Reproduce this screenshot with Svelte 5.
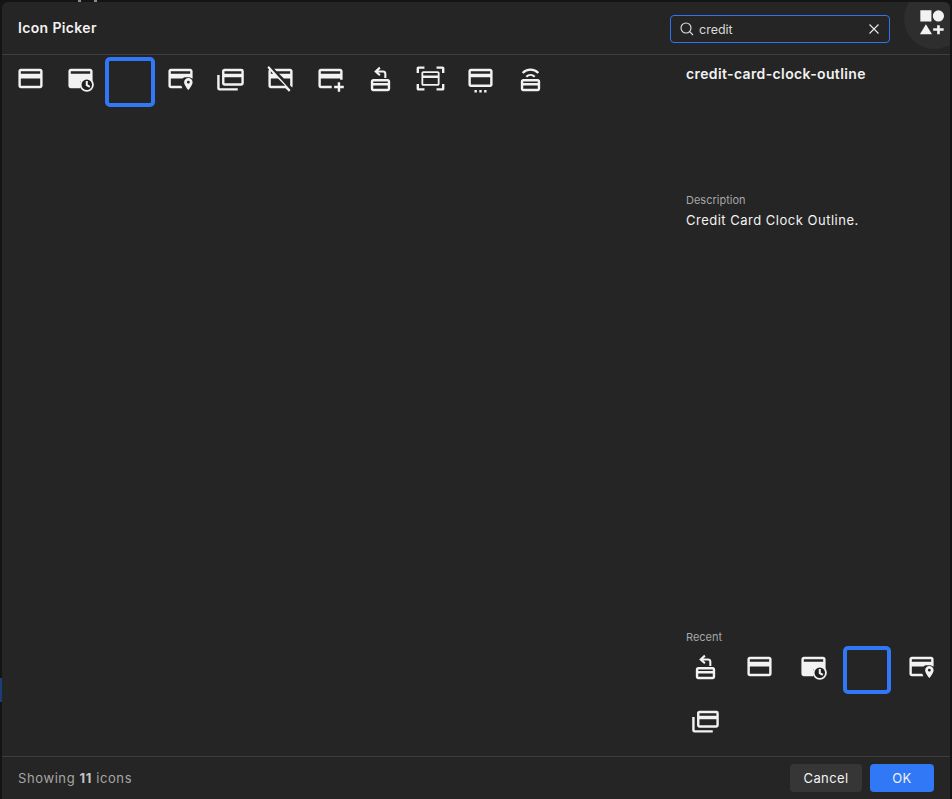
<script>
	const paths = {
		card: 'M20 8H4V6H20M20 18H4V12H20M20 4H4C2.89 4 2 4.89 2 6V18C2 19.11 2.89 20 4 20H20C21.11 20 22 19.11 22 18V6C22 4.89 21.11 4 20 4Z',
		marker: 'M20 4H4C2.89 4 2 4.89 2 6V18C2 19.11 2.89 20 4 20H13.6C13.2 19.3 12.9 18.6 12.7 18H4V12H13.6C14.4 11.4 15.4 11 16.5 11H18.5C19.9 11 21.1 11.5 22 12.3V6C22 4.89 21.11 4 20 4M20 8H4V6H20V8M18.5 11.5C16.6 11.5 15 13.1 15 15C15 17.6 18.5 21.5 18.5 21.5S22 17.6 22 15C22 13.1 20.4 11.5 18.5 11.5M18.5 13.8A1.2 1.2 0 1 1 18.5 16.2A1.2 1.2 0 0 1 18.5 13.8Z',
		multiple: 'M21 8V6H7V8H21M21 16V11H7V16H21M21 4A2 2 0 0 1 23 6V16A2 2 0 0 1 21 18H7C5.89 18 5 17.1 5 16V6C5 4.89 5.89 4 7 4H21M3 20H18V22H3A2 2 0 0 1 1 20V9H3V20Z',
		off: 'M20 4H6.8L8.8 6H20V8H10.8L14.8 12H20V17.8L21.7 19.5C21.9 19.1 22 18.6 22 18V6C22 4.9 21.1 4 20 4M2.4 1.7L1.1 3L2.6 4.5C2.2 4.9 2 5.4 2 6V18C2 19.1 2.9 20 4 20H16.1L19 22.9L20.3 21.6L2.4 1.7M4 6.1L5.9 8H4V6.1M4 18V12H9.9L15.9 18H4Z',
		plus: 'M20 4H4C2.89 4 2 4.89 2 6V18C2 19.11 2.89 20 4 20H13V18H4V12H20V13H22V6C22 4.89 21.11 4 20 4M20 8H4V6H20V8M20 15V18H23V20H20V23H18V20H15V18H18V15H20Z',
		dots: 'M20 4H4C2.89 4 2 4.89 2 6V17C2 18.11 2.89 19 4 19H20C21.11 19 22 18.11 22 17V6C22 4.89 21.11 4 20 4M20 8H4V6H20V8M20 17H4V11H20V17M7 21.5H9V23.5H7V21.5M11 21.5H13V23.5H11V21.5M15 21.5H17V23.5H15V21.5Z',
		small: 'M6 12.5H18C19.1 12.5 20 13.4 20 14.5V20.5C20 21.6 19.1 22.5 18 22.5H6C4.9 22.5 4 21.6 4 20.5V14.5C4 13.4 4.9 12.5 6 12.5M6 14.5V15.7H18V14.5H6M6 17.7V20.5H18V17.7H6Z',
		scan: 'M2 2H7V4H2.5V7.5H0.5V3.5C0.5 2.7 1.2 2 2 2M22 2C22.8 2 23.5 2.7 23.5 3.5V7.5H21.5V4H17V2H22M2.5 16.5V20H7V22H2C1.2 22 0.5 21.3 0.5 20.5V16.5H2.5M21.5 16.5H23.5V20.5C23.5 21.3 22.8 22 22 22H17V20H21.5V16.5M6 6H18C18.8 6 19.5 6.7 19.5 7.5V16.5C19.5 17.3 18.8 18 18 18H6C5.2 18 4.5 17.3 4.5 16.5V7.5C4.5 6.7 5.2 6 6 6M6 7.5V9.5H18V7.5H6M6 11.5V16.5H18V11.5H6Z'
	};

	const icons = [
		{ name: 'credit-card-outline', key: 'card' },
		{ name: 'credit-card-clock', key: 'clock' },
		{ name: 'credit-card-clock-outline', key: null },
		{ name: 'credit-card-marker-outline', key: 'marker' },
		{ name: 'credit-card-multiple-outline', key: 'multiple' },
		{ name: 'credit-card-off-outline', key: 'off' },
		{ name: 'credit-card-plus-outline', key: 'plus' },
		{ name: 'credit-card-refund-outline', key: 'refund' },
		{ name: 'credit-card-scan-outline', key: 'scan' },
		{ name: 'credit-card-settings-outline', key: 'dots' },
		{ name: 'credit-card-wireless-outline', key: 'wireless' }
	];

	const recent = ['refund', 'card', 'clock', null, 'marker', 'multiple'];
	let search = $state('credit');
</script>

{#snippet glyph(key)}
	{#if key}
		<svg viewBox="0 0 24 24" width="29" height="29" fill="#f2f2f2">
			{#if key === 'clock'}
				<path
					fill-rule="evenodd"
					d="M4 4H20C21.11 4 22 4.89 22 6V14H12V20H4C2.89 20 2 19.11 2 18V6C2 4.89 2.89 4 4 4M4 6V8H20V6H4Z"
				/>
				<circle cx="17.2" cy="17.2" r="5.1" fill="#1f1f1f" stroke="#f2f2f2" stroke-width="1.5" />
				<path d="M17.2 14V17.5L19.7 19" fill="none" stroke="#f2f2f2" stroke-width="1.7" />
			{:else if key === 'refund'}
				<path fill-rule="evenodd" d={paths.small} />
				<path d="M11.5 3L8 6.2L11.5 9.4M8 6.2H14A2 2 0 0 1 16 8.2V11.5" fill="none" stroke="#f2f2f2" stroke-width="1.7" />
			{:else if key === 'wireless'}
				<path fill-rule="evenodd" d={paths.small} />
				<path d="M5.5 7.5C9 3.8 15 3.8 18.5 7.5M8.5 10.5C10.5 8.6 13.5 8.6 15.5 10.5" fill="none" stroke="#f2f2f2" stroke-width="1.8" />
			{:else}
				<path fill-rule="evenodd" d={paths[key]} />
			{/if}
		</svg>
	{/if}
{/snippet}

<div class="peek peek-a"></div>
<div class="peek peek-b"></div>
<div class="peek peek-side"></div>

<div class="dialog">
	<header>
		<h1>Icon Picker</h1>
		<div class="search">
			<svg viewBox="0 0 16 16" width="16" height="16" fill="none" stroke="#e4e4e4" stroke-width="1.1">
				<circle cx="7" cy="7" r="5" />
				<path d="M10.7 10.7L14 14" />
			</svg>
			<input bind:value={search} />
			<svg viewBox="0 0 12 12" width="12" height="12" fill="none" stroke="#e8e8e8" stroke-width="1.1">
				<path d="M1.5 1.5L10.5 10.5M10.5 1.5L1.5 10.5" />
			</svg>
		</div>
	</header>

	<div class="badge">
		<svg viewBox="0 0 24 24" width="28" height="28" fill="#f2f2f2">
			<path d="M2 2H11.5V11.5H2ZM17.5 2A4.8 4.8 0 1 1 17.5 11.6A4.8 4.8 0 0 1 17.5 2ZM6.8 14L12 22.5H1.6ZM16.4 14.8H18.7V17.4H22V19.6H18.7V22.5H16.4V19.6H13V17.4H16.4Z" />
		</svg>
	</div>

	<main>
		<div class="grid">
			{#each icons as icon}
				<div class="cell" class:selected={icon.key === null} title={icon.name}>
					{@render glyph(icon.key)}
				</div>
			{/each}
		</div>

		<aside>
			<h2>credit-card-clock-outline</h2>
			<div class="desc">
				<label for="desc-text">Description</label>
				<p id="desc-text">Credit Card Clock Outline.</p>
			</div>
			<div class="recent">
				<span class="caption">Recent</span>
				<div class="recent-grid">
					{#each recent as key}
						<div class="recent-cell" class:selected={key === null}>
							{@render glyph(key)}
						</div>
					{/each}
				</div>
			</div>
		</aside>
	</main>

	<footer>
		<span class="count">Showing <b>11</b> icons</span>
		<div class="actions">
			<button class="cancel">Cancel</button>
			<button class="ok">OK</button>
		</div>
	</footer>
</div>

<style>
	:global(body) {
		background: #141414;
		overflow: hidden;
	}

	/* bits of the page behind the dialog */
	.peek {
		position: absolute;
	}

	.peek-a,
	.peek-b {
		top: 0;
		width: 3px;
		height: 2px;
		background: #8a8a8a;
	}

	.peek-a {
		left: 78px;
	}

	.peek-b {
		left: 94px;
	}

	.peek-side {
		top: 678px;
		left: 0;
		width: 2px;
		height: 24px;
		background: #1d3d78;
	}

	.dialog {
		position: relative;
		box-sizing: border-box;
		display: flex;
		flex-direction: column;
		width: 948px;
		height: 797px;
		margin: 2px 0 0 2px;
		border-radius: 6px 6px 0 0;
		overflow: hidden;
		background: #252525;
		color: #f2f2f2;
		font-family: Inter, 'Liberation Sans', sans-serif;
	}

	header {
		flex: none;
		box-sizing: border-box;
		display: flex;
		align-items: center;
		justify-content: space-between;
		height: 53px;
		padding: 0 60px 0 16px;
		border-bottom: 1px solid #3e3e3e;
	}

	h1 {
		margin: 0 0 1px;
		font-size: 14px;
		font-weight: 600;
		letter-spacing: 0.35px;
	}

	.search {
		box-sizing: border-box;
		display: flex;
		align-items: center;
		gap: 4px;
		width: 220px;
		height: 28px;
		margin-top: 2px;
		padding: 0 9px 0 8px;
		border: 1px solid #2f74f0;
		border-radius: 4px;
	}

	.search input {
		flex: 1;
		min-width: 0;
		padding: 0;
		border: none;
		outline: none;
		background: none;
		color: #d8d8d8;
		font: 12.5px Inter, 'Liberation Sans', sans-serif;
	}

	.badge {
		position: absolute;
		top: -13px;
		right: -14px;
		display: flex;
		align-items: flex-start;
		justify-content: flex-start;
		width: 60px;
		height: 60px;
		box-sizing: border-box;
		padding: 19px 0 0 14px;
		border-radius: 50%;
		background: #2e2e2e;
	}

	main {
		flex: 1;
		display: flex;
		min-height: 0;
	}

	.grid {
		flex: 1;
		display: flex;
		flex-wrap: wrap;
		align-content: flex-start;
		padding: 2px 0 0 3px;
	}

	.cell {
		box-sizing: border-box;
		display: flex;
		align-items: center;
		justify-content: center;
		width: 50px;
		height: 50px;
		padding-bottom: 7px;
	}

	.selected {
		padding: 0;
		border: 4px solid #3078f5;
		border-radius: 5px;
	}

	aside {
		flex: none;
		display: flex;
		flex-direction: column;
		width: 264px;
	}

	h2 {
		margin: 10px 0 0;
		font-size: 14px;
		font-weight: 600;
		line-height: 17px;
		letter-spacing: 0.37px;
	}

	.desc {
		margin-top: 111px;
	}

	.desc label,
	.caption {
		display: block;
		color: #a6a6a6;
		font-size: 11px;
		line-height: 14px;
	}

	.desc p {
		margin: 5px 0 0;
		font-size: 13px;
		line-height: 16px;
		letter-spacing: 0.5px;
	}

	.recent {
		margin-top: auto;
		padding-bottom: 8px;
	}

	.recent-grid {
		display: flex;
		flex-wrap: wrap;
		gap: 6px;
		margin: 2px 0 0 -5px;
	}

	.recent-cell {
		box-sizing: border-box;
		display: flex;
		align-items: center;
		justify-content: center;
		width: 48px;
		height: 48px;
		padding-bottom: 7px;
	}

	.recent-cell.selected {
		padding: 0;
	}

	footer {
		flex: none;
		box-sizing: border-box;
		display: flex;
		align-items: center;
		justify-content: space-between;
		height: 43px;
		padding: 0 16px;
		border-top: 1px solid #3e3e3e;
	}

	.count {
		color: #a6a6a6;
		font-size: 13px;
		letter-spacing: 0.6px;
	}

	.count b {
		color: #c4c4c4;
		font-weight: 700;
	}

	.actions {
		display: flex;
		gap: 8px;
	}

	button {
		height: 28px;
		border: none;
		border-radius: 4px;
		color: #f2f2f2;
		font: 400 13px Inter, 'Liberation Sans', sans-serif;
		letter-spacing: 0.4px;
	}

	.cancel {
		width: 72px;
		background: #363636;
	}

	.ok {
		width: 64px;
		background: #3078f5;
	}
</style>
